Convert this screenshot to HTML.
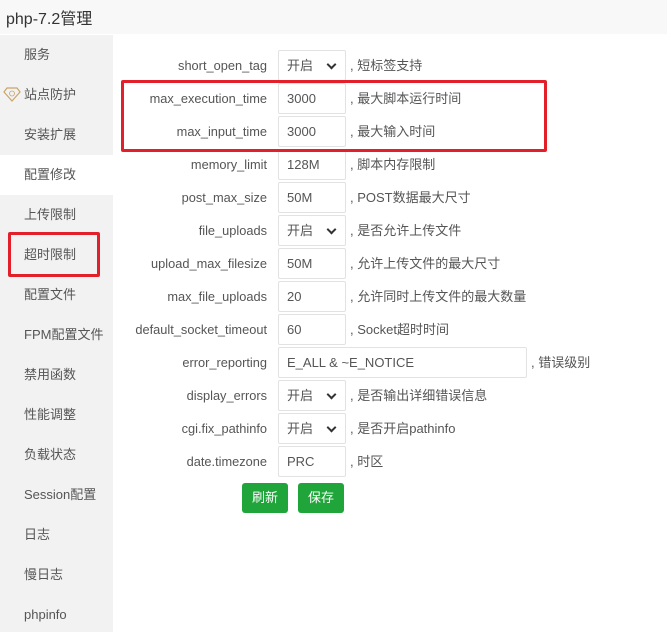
<!DOCTYPE html>
<html><head><meta charset="utf-8"><style>
*{margin:0;padding:0;box-sizing:border-box}
body{width:667px;height:632px;overflow:hidden;background:#fff;font-family:"Liberation Sans","Noto Sans CJK SC",sans-serif;font-size:13px;color:#555;position:relative}
.hd{position:absolute;left:0;top:0;width:667px;height:34px;background:#f8f8f8;font-size:16px;color:#333;padding:5px 0 0 6px}
.sb{position:absolute;left:0;top:35px;width:113px;height:597px;background:#f2f2f2}
.sb div{height:40px;line-height:40px;padding-left:24px;color:#555;font-size:13px}
.sb .on{background:#fff}
.row{position:absolute;left:120px;height:31px;width:540px}
.row .l{position:absolute;right:calc(540px - 147px);top:0;line-height:31px;white-space:nowrap;text-align:right;font-size:12.8px}
.row .i{position:absolute;left:158px;top:0;width:68px;height:31px;border:1px solid #e2e2e2;border-radius:2px;line-height:29px;padding-left:8px;color:#555;background:#fff}
.row .t{position:absolute;left:230px;top:0;line-height:31px;white-space:nowrap}
.sel:after{content:"";position:absolute;right:10px;top:10px;width:5px;height:5px;border-right:2px solid #333;border-bottom:2px solid #333;transform:rotate(45deg)}
.red{position:absolute;border:3px solid #e3202a;border-radius:2px}
.btn{position:absolute;top:483px;width:46px;height:30px;background:#20a53a;color:#fff;border-radius:3px;text-align:center;line-height:30px;font-size:13px}
</style></head><body>
<div class="hd">php-7.2管理</div>
<div class="sb">
<div>服务</div>
<div>站点防护</div>
<div>安装扩展</div>
<div class="on">配置修改</div>
<div>上传限制</div>
<div>超时限制</div>
<div>配置文件</div>
<div>FPM配置文件</div>
<div>禁用函数</div>
<div>性能调整</div>
<div>负载状态</div>
<div>Session配置</div>
<div>日志</div>
<div>慢日志</div>
<div>phpinfo</div>
</div>
<svg style="position:absolute;left:3px;top:87px" width="18" height="15" viewBox="0 0 18 15"><path d="M4 1h10l3 4-8 9-8-9z" fill="none" stroke="#c9a46a" stroke-width="1.2"/><circle cx="9" cy="6.5" r="2.5" fill="none" stroke="#c9a46a" stroke-width="0.8"/></svg>

<div class="row" style="top:50px"><span class="l">short_open_tag</span><span class="i sel">开启</span><span class="t">, 短标签支持</span></div>
<div class="row" style="top:83px"><span class="l">max_execution_time</span><span class="i">3000</span><span class="t">, 最大脚本运行时间</span></div>
<div class="row" style="top:116px"><span class="l">max_input_time</span><span class="i">3000</span><span class="t">, 最大输入时间</span></div>
<div class="row" style="top:149px"><span class="l">memory_limit</span><span class="i">128M</span><span class="t">, 脚本内存限制</span></div>
<div class="row" style="top:182px"><span class="l">post_max_size</span><span class="i">50M</span><span class="t">, POST数据最大尺寸</span></div>
<div class="row" style="top:215px"><span class="l">file_uploads</span><span class="i sel">开启</span><span class="t">, 是否允许上传文件</span></div>
<div class="row" style="top:248px"><span class="l">upload_max_filesize</span><span class="i">50M</span><span class="t">, 允许上传文件的最大尺寸</span></div>
<div class="row" style="top:281px"><span class="l">max_file_uploads</span><span class="i">20</span><span class="t">, 允许同时上传文件的最大数量</span></div>
<div class="row" style="top:314px"><span class="l">default_socket_timeout</span><span class="i">60</span><span class="t">, Socket超时时间</span></div>
<div class="row" style="top:347px"><span class="l">error_reporting</span><span class="i" style="width:249px">E_ALL &amp; ~E_NOTICE</span><span class="t" style="left:411px">, 错误级别</span></div>
<div class="row" style="top:380px"><span class="l">display_errors</span><span class="i sel">开启</span><span class="t">, 是否输出详细错误信息</span></div>
<div class="row" style="top:413px"><span class="l">cgi.fix_pathinfo</span><span class="i sel">开启</span><span class="t">, 是否开启pathinfo</span></div>
<div class="row" style="top:446px"><span class="l">date.timezone</span><span class="i">PRC</span><span class="t">, 时区</span></div>
<div class="btn" style="left:242px">刷新</div>
<div class="btn" style="left:298px">保存</div>
<div class="red" style="left:121px;top:80px;width:426px;height:72px"></div>
<div class="red" style="left:8px;top:232px;width:92px;height:45px"></div>
</body></html>
